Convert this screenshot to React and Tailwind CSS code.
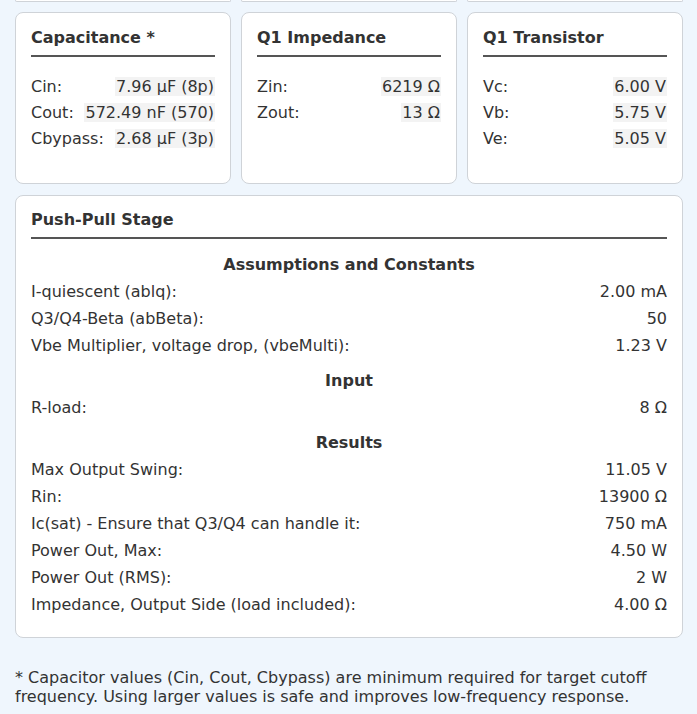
import React from "react";

const capRows = [
  ["Cin:", "7.96 µF (8p)"],
  ["Cout:", "572.49 nF (570)"],
  ["Cbypass:", "2.68 µF (3p)"],
];
const impRows = [
  ["Zin:", "6219 Ω"],
  ["Zout:", "13 Ω"],
];
const trRows = [
  ["Vc:", "6.00 V"],
  ["Vb:", "5.75 V"],
  ["Ve:", "5.05 V"],
];

const sections = [
  {
    title: "Assumptions and Constants",
    rows: [
      ["I-quiescent (ablq):", "2.00 mA"],
      ["Q3/Q4-Beta (abBeta):", "50"],
      ["Vbe Multiplier, voltage drop, (vbeMulti):", "1.23 V"],
    ],
  },
  { title: "Input", rows: [["R-load:", "8 Ω"]] },
  {
    title: "Results",
    rows: [
      ["Max Output Swing:", "11.05 V"],
      ["Rin:", "13900 Ω"],
      ["Ic(sat) - Ensure that Q3/Q4 can handle it:", "750 mA"],
      ["Power Out, Max:", "4.50 W"],
      ["Power Out (RMS):", "2 W"],
      ["Impedance, Output Side (load included):", "4.00 Ω"],
    ],
  },
];

function SmallCard({ title, rows }) {
  return (
    <div className="bg-white border border-[#cfd3d8] rounded-lg px-[15px] pt-[15px] h-[172px]">
      <h3 className="font-bold text-[16px] leading-5 pb-[7px] border-b-2 border-[#555]">{title}</h3>
      <div className="mt-[17px] flex flex-col">
        {rows.map(([k, v]) => (
          <div key={k} className="flex justify-between leading-[26px]">
            <span>{k}</span>
            <span>
              <span className="bg-[#f3f3f3] px-px">{v}</span>
            </span>
          </div>
        ))}
      </div>
    </div>
  );
}

export default function App() {
  return (
    <div
      className="min-h-screen bg-[#eff6fd] text-[#333] text-[16px] px-[15px] pr-[14px]"
      style={{ fontFamily: '"DejaVu Sans", sans-serif' }}
    >
      <div className="grid grid-cols-3 gap-[10px]">
        <div className="h-[2px] bg-white border-x border-b border-[#cfd3d8] rounded-b-lg" />
        <div className="h-[2px] bg-white border-x border-b border-[#cfd3d8] rounded-b-lg" />
        <div className="h-[2px] bg-white border-x border-b border-[#cfd3d8] rounded-b-lg" />
      </div>

      <div className="grid grid-cols-3 gap-[10px] mt-[10px]">
        <SmallCard title="Capacitance *" rows={capRows} />
        <SmallCard title="Q1 Impedance" rows={impRows} />
        <SmallCard title="Q1 Transistor" rows={trRows} />
      </div>

      <div className="mt-[11px] bg-white border border-[#cfd3d8] rounded-lg px-[15px] pt-[14px] pb-[22px]">
        <h3 className="font-bold text-[16px] leading-5 pb-[7px] border-b-2 border-[#555]">Push-Pull Stage</h3>
        {sections.map((s, i) => (
          <div key={s.title} className={i === 0 ? "mt-[16px]" : "mt-[15px]"}>
            <h4 className="font-bold text-center leading-5 mb-[7px]">{s.title}</h4>
            <div className="flex flex-col gap-[7px]">
              {s.rows.map(([k, v]) => (
                <div key={k} className="flex justify-between leading-5">
                  <span>{k}</span>
                  <span>{v}</span>
                </div>
              ))}
            </div>
          </div>
        ))}
      </div>

      <p className="mt-[30px] text-[16px] leading-[19px] pb-4">
        * Capacitor values (Cin, Cout, Cbypass) are minimum required for target cutoff frequency. Using larger values is safe and improves low-frequency response.
      </p>
    </div>
  );
}
